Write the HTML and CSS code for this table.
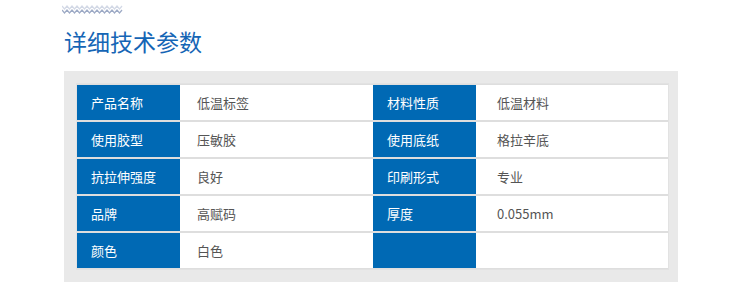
FILE: index.html
```html
<!DOCTYPE html>
<html lang="zh-CN">
<head>
<meta charset="utf-8">
<title>详细技术参数</title>
<link rel="stylesheet" href="styles.css">
</head>
<body>
<div class="page">
  <svg class="zigzag" width="62" height="12" viewBox="0 0 62 12">
    <polyline points="0,2 2.5,5 5,2 7.5,5 10,2 12.5,5 15,2 17.5,5 20,2 22.5,5 25,2 27.5,5 30,2 32.5,5 35,2 37.5,5 40,2 42.5,5 45,2 47.5,5 50,2 52.5,5 55,2 57.5,5 60,2" fill="none" stroke="#d3d9e6" stroke-width="1.2"/>
    <polyline points="0,6 2.5,9 5,6 7.5,9 10,6 12.5,9 15,6 17.5,9 20,6 22.5,9 25,6 27.5,9 30,6 32.5,9 35,6 37.5,9 40,6 42.5,9 45,6 47.5,9 50,6 52.5,9 55,6 57.5,9 60,6" fill="none" stroke="#9eabc6" stroke-width="1.2"/>
  </svg>
  <h1 class="title">详细技术参数</h1>
  <div class="panel">
    <div class="spec">
      <div class="label">产品名称</div><div class="value">低温标签</div>
      <div class="label">材料性质</div><div class="value value-right">低温材料</div>
      <div class="label">使用胶型</div><div class="value">压敏胶</div>
      <div class="label">使用底纸</div><div class="value value-right">格拉辛底</div>
      <div class="label">抗拉伸强度</div><div class="value">良好</div>
      <div class="label">印刷形式</div><div class="value value-right">专业</div>
      <div class="label">品牌</div><div class="value">高赋码</div>
      <div class="label">厚度</div><div class="value value-right">0.055mm</div>
      <div class="label">颜色</div><div class="value">白色</div>
      <div class="label"></div><div class="value value-right"></div>
    </div>
  </div>
</div>
</body>
</html>
```
FILE: styles.css
```css
html, body {
  margin: 0;
  padding: 0;
  background: #ffffff;
}
body {
  font-family: "Noto Sans CJK SC", "Noto Sans", sans-serif;
  width: 750px;
  height: 296px;
  overflow: hidden;
}
.page {
  padding-top: 4px;
}
.zigzag {
  display: block;
  margin-left: 62px;
}
.title {
  margin: 12px 0 0 64px;
  font-size: 23px;
  line-height: 26px;
  font-weight: 400;
  color: #1565b5;
  height: 26px;
}
.panel {
  margin: 17px 0 0 64px;
  width: 614px;
  height: 211px;
  box-sizing: border-box;
  background: #e9e9e9;
  padding: 12px 0 0 12px;
}
.spec {
  display: grid;
  grid-template-columns: 103px 193px 103px 192px;
  grid-auto-rows: 35px;
  row-gap: 2px;
  width: 591px;
  background: #dedede;
  border: 1px solid #e2e2e2;
  padding: 1px 0;
  box-sizing: content-box;
  background-clip: padding-box;
}
.label {
  background: #0069b4;
  color: #ffffff;
  font-size: 13px;
  line-height: 35px;
  padding-left: 14px;
  white-space: nowrap;
}
.value {
  background: #ffffff;
  color: #555555;
  font-size: 13px;
  line-height: 35px;
  padding-left: 17px;
  white-space: nowrap;
}
.value-right {
  padding-left: 21px;
}
```
